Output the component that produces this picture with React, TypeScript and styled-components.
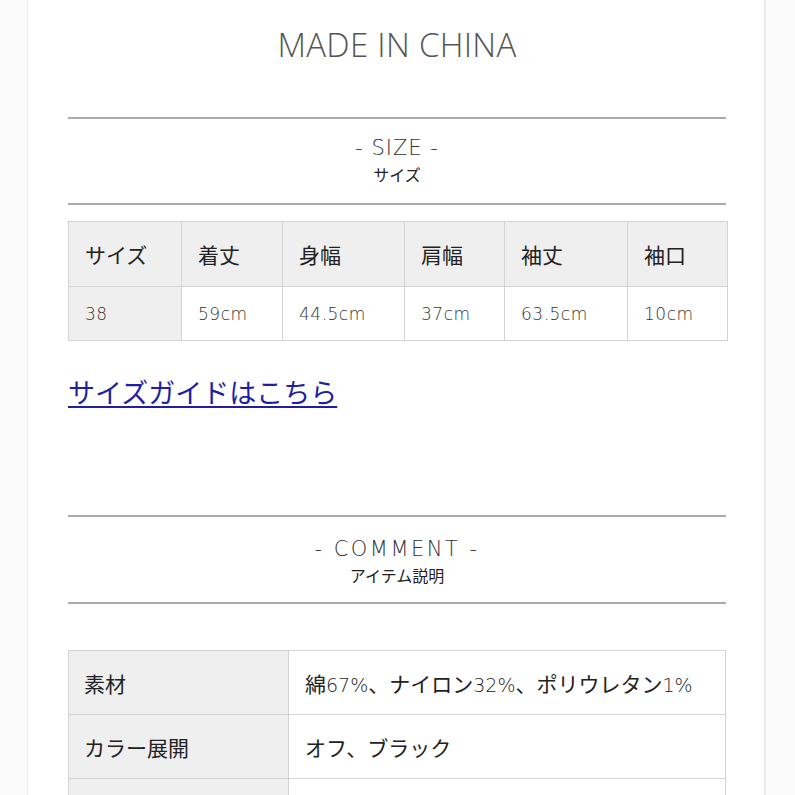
import React from "react";
import styled, { createGlobalStyle } from "styled-components";

const Global = createGlobalStyle`
  html, body { margin: 0; padding: 0; background: #fbfbfb; }
  body { font-family: "Noto Sans CJK JP", "Noto Sans", sans-serif; color: #333; }
`;

const Card = styled.div`
  box-sizing: border-box;
  margin-left: 27px;
  width: 739px;
  min-height: 100vh;
  background: #fff;
  border-left: 1px solid #efefef;
  border-right: 2px solid #ececec;
  padding: 0 38px 0 40px;
`;

const Brand = styled.h1`
  margin: 0;
  padding-top: 25px;
  height: 117px;
  box-sizing: border-box;
  text-align: center;
  font-family: "Open Sans", "Noto Sans", sans-serif;
  font-weight: 300;
  font-size: 33px;
  line-height: 40px;
  letter-spacing: 0.3px;
  color: #555;
`;

const Rule = styled.hr`
  margin: 0;
  border: 0;
  height: 2px;
  background: #ababab;
`;

const Heading = styled.div<{ $h: number; $shift: number }>`
  height: ${(p) => p.$h}px;
  display: flex;
  flex-direction: column;
  align-items: center;
  justify-content: center;
  padding-top: ${(p) => p.$shift}px;
  padding-bottom: 2px;
  box-sizing: border-box;
`;

const HeadTitle = styled.div<{ $ls: number }>`
  font-family: "DejaVu Sans", sans-serif;
  font-weight: 200;
  font-size: 21px;
  line-height: 28px;
  letter-spacing: ${(p) => p.$ls}px;
  color: #333;
`;

const HeadSub = styled.div`
  font-family: "Noto Sans CJK JP", sans-serif;
  font-size: 16px;
  line-height: 24px;
  color: #222;
`;

const Table = styled.table`
  width: 100%;
  border-collapse: collapse;
  table-layout: fixed;
  border: 1px solid #cfcfcf;
`;

const Th = styled.th`
  height: 64px;
  padding: 0 0 0 16px;
  text-align: left;
  font-family: "Noto Sans CJK JP", sans-serif;
  font-weight: 400;
  font-size: 21px;
  color: #222;
  background: #efefef;
  border: 1px solid #d3d3d3;
`;

const Td = styled.td<{ $shade?: boolean }>`
  height: 53px;
  padding: 0 0 0 16px;
  font-family: "DejaVu Sans", sans-serif;
  font-weight: 200;
  font-size: 17px;
  letter-spacing: 0.5px;
  color: #333;
  background: ${(p) => (p.$shade ? "#efefef" : "#fff")};
  border: 1px solid #d3d3d3;
`;

const LinkWrap = styled.div`
  margin-top: 31px;
  height: 143px;
`;

const GuideLink = styled.a`
  font-family: "Noto Sans CJK JP", sans-serif;
  font-size: 27px;
  line-height: 40px;
  color: #1f1fa3;
  text-decoration: underline;
  text-decoration-thickness: 2px;
  text-underline-offset: 3px;
`;

const Spacer = styled.div<{ $h: number }>`
  height: ${(p) => p.$h}px;
`;

const InfoLabel = styled.td`
  width: 204px;
  height: 63px;
  padding: 0 0 0 15px;
  font-family: "Noto Sans CJK JP", sans-serif;
  font-size: 21px;
  color: #222;
  background: #efefef;
  border: 1px solid #d3d3d3;
`;

const InfoValue = styled.td`
  height: 63px;
  padding: 0 0 0 16px;
  font-family: "Noto Sans CJK JP", sans-serif;
  font-size: 21px;
  color: #222;
  background: #fff;
  border: 1px solid #d3d3d3;
`;

const Num = styled.span`
  font-family: "DejaVu Sans", sans-serif;
  font-weight: 200;
  font-size: 19px;
`;

const cols = [113, 101, 122, 100, 123, 100];
const heads = ["サイズ", "着丈", "身幅", "肩幅", "袖丈", "袖口"];
const vals = ["38", "59cm", "44.5cm", "37cm", "63.5cm", "10cm"];

export default function App() {
  return (
    <>
      <Global />
      <Card>
        <Brand>MADE IN CHINA</Brand>
        <Rule />
        <Heading $h={84} $shift={0}>
          <HeadTitle $ls={1}>- SIZE -</HeadTitle>
          <HeadSub>サイズ</HeadSub>
        </Heading>
        <Rule />
        <Spacer $h={16} />
        <Table>
          <colgroup>
            {cols.map((w, i) => (
              <col key={i} style={{ width: w }} />
            ))}
          </colgroup>
          <thead>
            <tr>
              {heads.map((h) => (
                <Th key={h}>{h}</Th>
              ))}
            </tr>
          </thead>
          <tbody>
            <tr>
              {vals.map((v, i) => (
                <Td key={v} $shade={i === 0}>
                  {v}
                </Td>
              ))}
            </tr>
          </tbody>
        </Table>
        <LinkWrap>
          <GuideLink href="#">サイズガイドはこちら</GuideLink>
        </LinkWrap>
        <Rule />
        <Heading $h={85} $shift={4}>
          <HeadTitle $ls={2.5}>- COMMENT -</HeadTitle>
          <HeadSub>アイテム説明</HeadSub>
        </Heading>
        <Rule />
        <Spacer $h={46} />
        <Table>
          <tbody>
            <tr>
              <InfoLabel>素材</InfoLabel>
              <InfoValue>
                綿<Num>67%</Num>、ナイロン<Num>32%</Num>、ポリウレタン<Num>1%</Num>
              </InfoValue>
            </tr>
            <tr>
              <InfoLabel>カラー展開</InfoLabel>
              <InfoValue>オフ、ブラック</InfoValue>
            </tr>
            <tr>
              <InfoLabel />
              <InfoValue />
            </tr>
          </tbody>
        </Table>
        <Spacer $h={40} />
      </Card>
    </>
  );
}
